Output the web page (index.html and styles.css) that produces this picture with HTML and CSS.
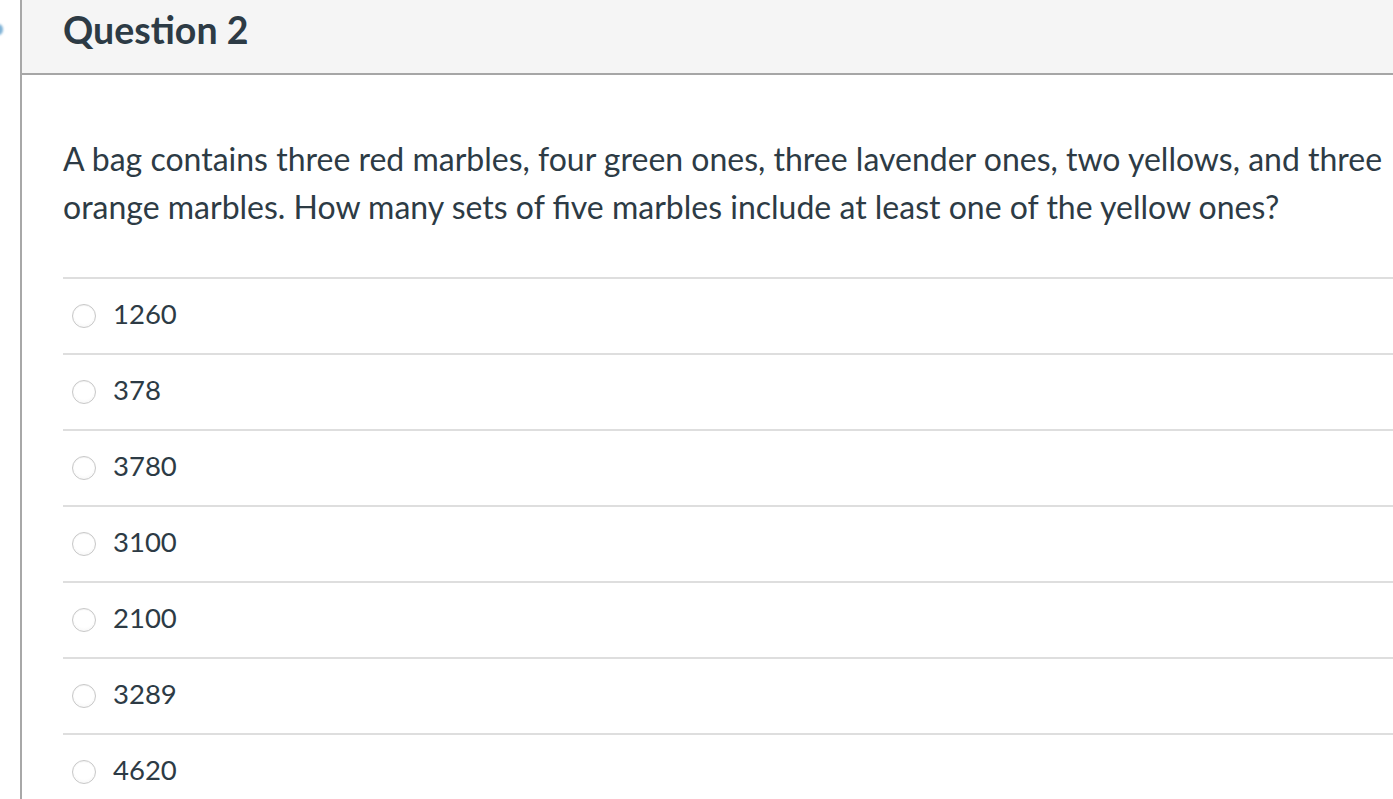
FILE: index.html
```html
<!DOCTYPE html>
<html>
<head>
<meta charset="utf-8">
<link rel="stylesheet" href="styles.css">
</head>
<body>
<div class="page">
  <div class="gutter"><span class="dot"></span></div>
  <div class="question">
    <div class="header"><h2 class="title">Question 2</h2></div>
    <div class="content">
      <p class="text">A bag contains three red marbles, four green ones, three lavender ones, two yellows, and three orange marbles. How many sets of five marbles include at least one of the yellow ones?</p>
      <div class="answers">
        <label class="answer"><span class="radio"></span><span class="label">1260</span></label>
        <label class="answer"><span class="radio"></span><span class="label">378</span></label>
        <label class="answer"><span class="radio"></span><span class="label">3780</span></label>
        <label class="answer"><span class="radio"></span><span class="label">3100</span></label>
        <label class="answer"><span class="radio"></span><span class="label">2100</span></label>
        <label class="answer"><span class="radio"></span><span class="label">3289</span></label>
        <label class="answer"><span class="radio"></span><span class="label">4620</span></label>
      </div>
    </div>
  </div>
</div>
</body>
</html>
```
FILE: styles.css
```css
html, body {
  margin: 0;
  padding: 0;
  background: #ffffff;
  font-family: Lato, "Liberation Sans", sans-serif;
  color: #2d3b45;
  overflow: hidden;
}
.page {
  display: flex;
  min-height: 900px;
}
.gutter {
  width: 20px;
  position: relative;
}
.dot {
  position: absolute;
  left: -6px;
  top: 24px;
  width: 9px;
  height: 11px;
  border-radius: 50%;
  background: #7fb2d6;
  filter: blur(1px);
}
.question {
  flex: 1;
  border-left: 2px solid #a8a8a8;
}
.header {
  height: 73px;
  background: #f5f5f5;
  border-bottom: 2px solid #a6a6a6;
  padding-left: 41px;
  display: flex;
  align-items: center;
}
.title {
  margin: 0;
  margin-top: -15px;
  font-size: 37.5px;
  font-weight: 700;
  color: #2d3b45;
}
.content {
  padding: 60px 0 0 41px;
}
.text {
  margin: 0 0 46px 0;
  font-size: 32px;
  line-height: 48px;
}
.answers {
  display: flex;
  flex-direction: column;
}
.answer {
  display: flex;
  align-items: center;
  height: 74px;
  border-top: 2px solid #dedede;
  padding-left: 9px;
  gap: 17px;
}
.radio {
  width: 22px;
  height: 22px;
  border-radius: 50%;
  border: 1px solid #c8c8c8;
  background: radial-gradient(circle at 50% 40%, #ffffff 55%, #f0f0f0 100%);
  box-shadow: inset 0 1px 1px rgba(0,0,0,0.05);
  margin-top: -1px;
}
.label {
  font-size: 27.5px;
  margin-top: -6px;
}
```
